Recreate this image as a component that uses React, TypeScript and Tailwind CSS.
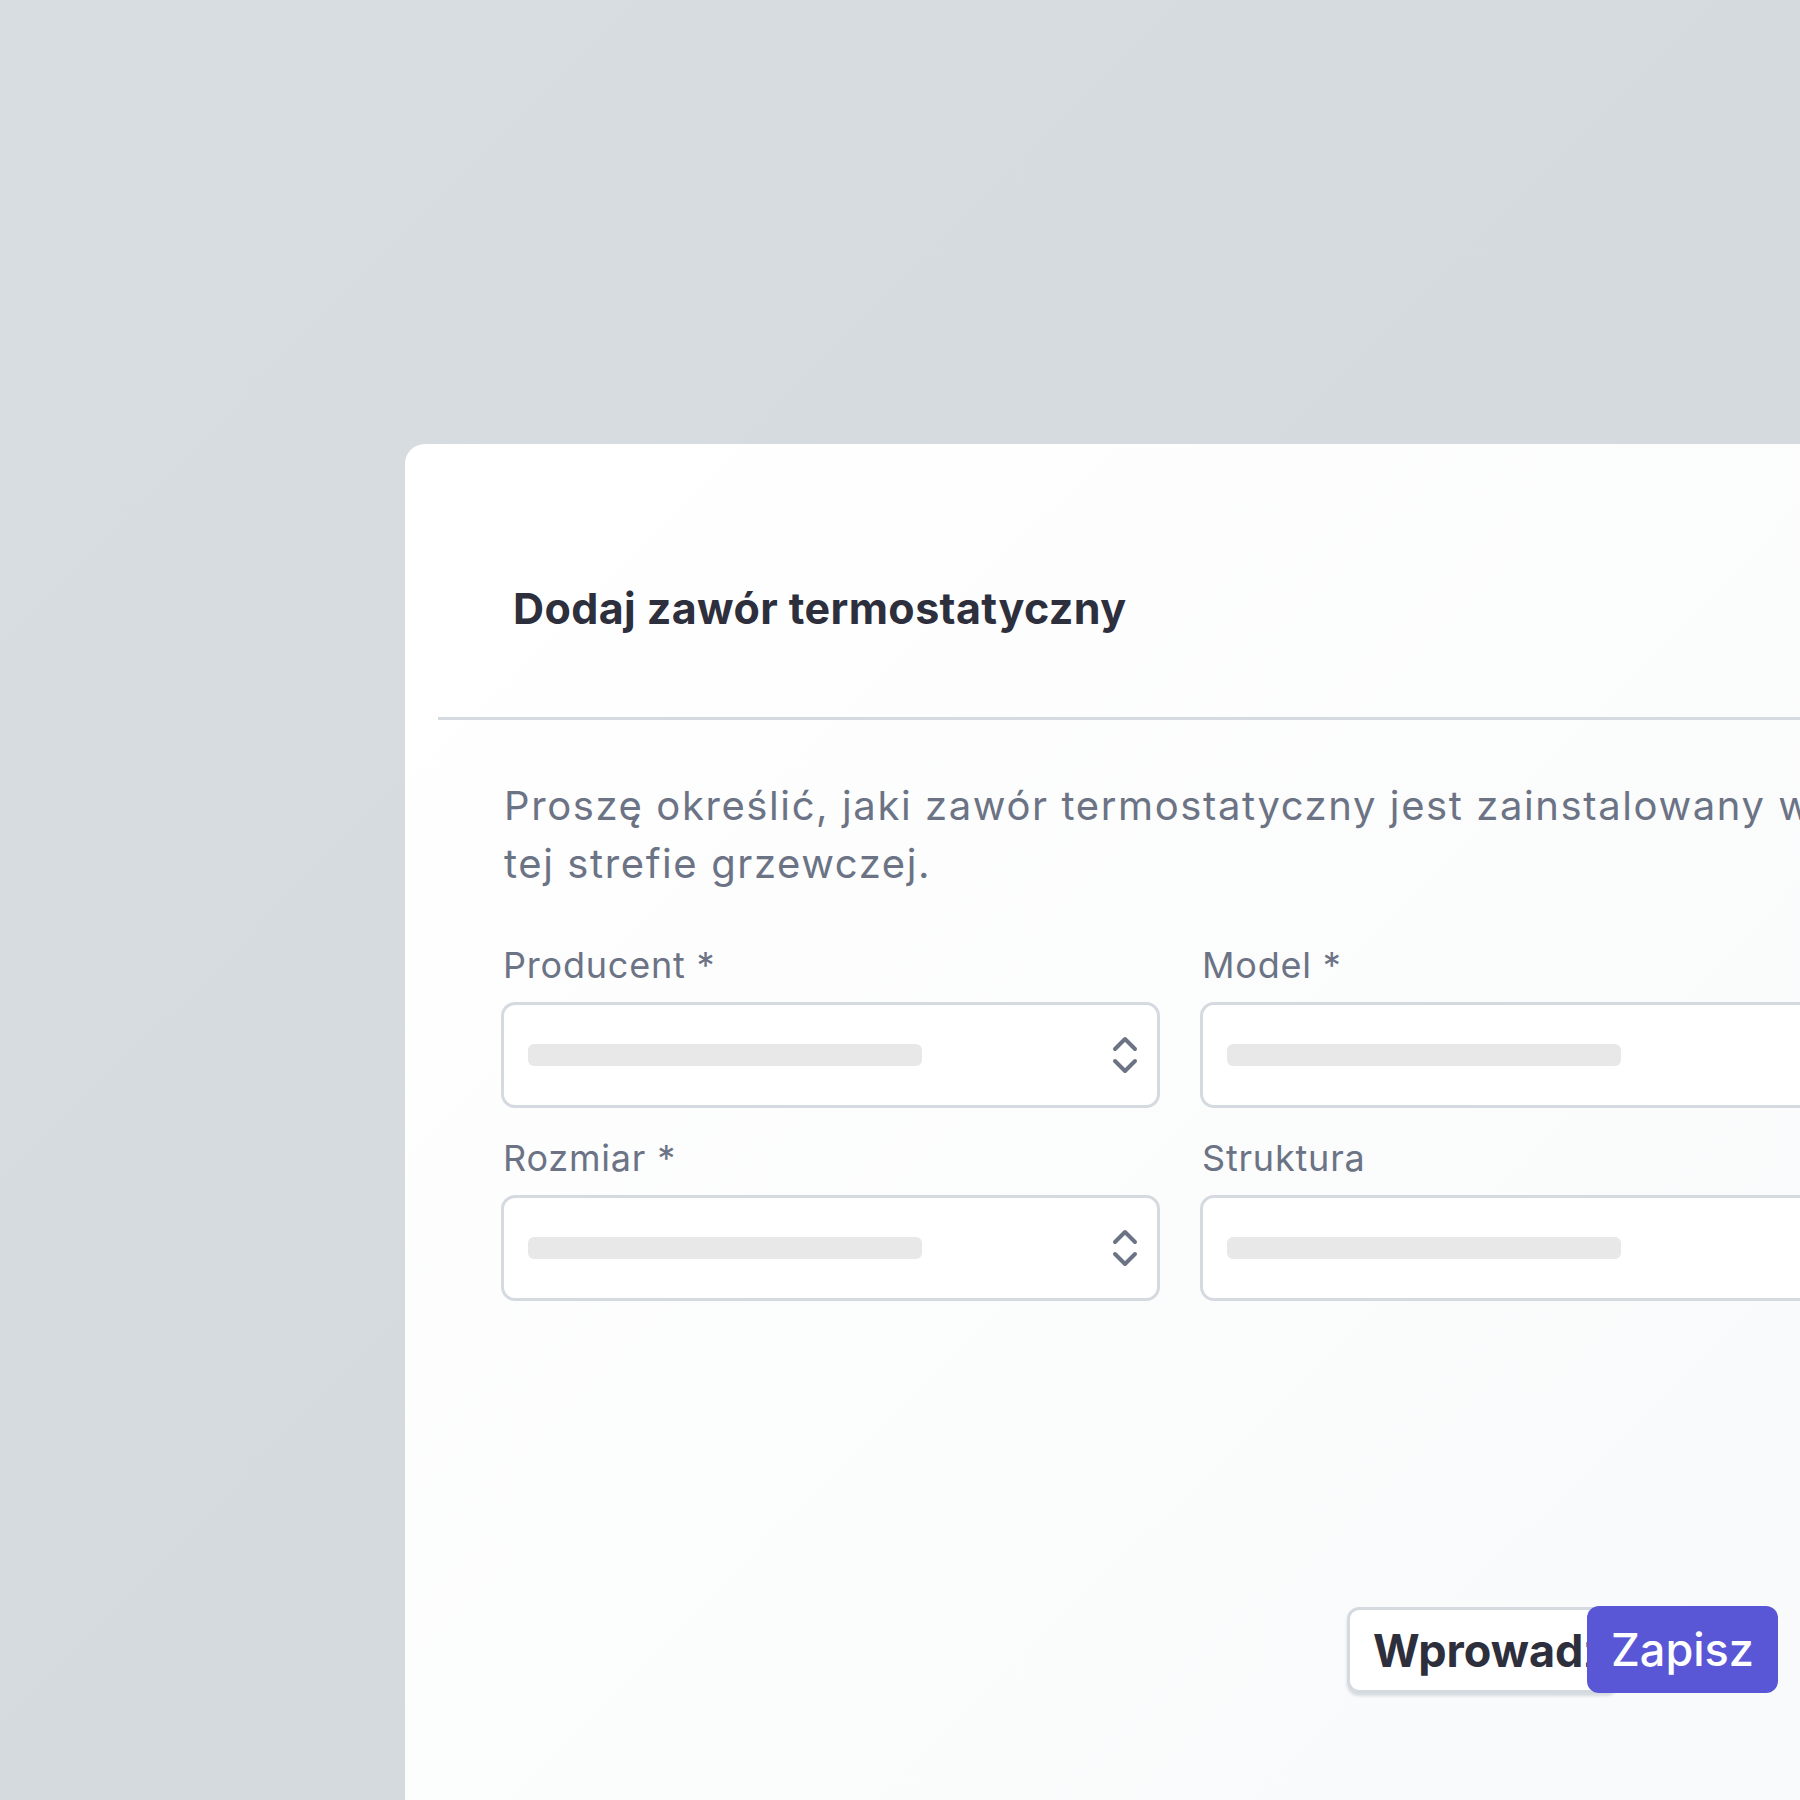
import React from "react";

const font = { fontFamily: "Inter, 'Noto Sans', sans-serif" };

function Chevrons() {
  return (
    <svg width="26" height="38" viewBox="0 0 26 38" fill="none" className="shrink-0">
      <path d="M3 13 L13 3 L23 13" stroke="#6b7385" strokeWidth="4" strokeLinecap="round" strokeLinejoin="round" />
      <path d="M3 25 L13 35 L23 25" stroke="#6b7385" strokeWidth="4" strokeLinecap="round" strokeLinejoin="round" />
    </svg>
  );
}

function Field({ label, select }: { label: string; select?: boolean }) {
  return (
    <div className="flex flex-col w-[659px] shrink-0">
      <div className="text-[36px] leading-none tracking-[0.8px] text-[#6b7385] mb-[19px] pl-[2px]">{label}</div>
      <div className="h-[106px] rounded-[14px] border-[3px] border-[#d5dae0] bg-white flex items-center pl-[24px] pr-[19px] justify-between">
        <div className="w-[394px] h-[22px] rounded-[6px] bg-[#e8e8e9]" />
        {select ? <Chevrons /> : null}
      </div>
    </div>
  );
}

export default function App() {
  return (
    <div
      className="w-[1800px] h-[1800px] overflow-hidden bg-gradient-to-br from-[#d8dde1] to-[#d3d8dc] pt-[444px] pl-[405px]"
      style={font}
    >
      <div className="w-[1500px] h-[1500px] rounded-t-[20px] bg-gradient-to-br from-white to-[#f8f9fa]">
        <div className="pt-[143px] pl-[108px]">
          <h1 className="text-[43px] leading-none font-bold text-[#2e2f3c] tracking-[0.4px]">
            Dodaj zawór termostatyczny
          </h1>
        </div>
        <div className="mt-[87px] ml-[33px] h-[3px] bg-[#d5dae0]" />
        <div className="pl-[99px]">
          <p className="mt-[57px] w-[1354px] text-[40px] leading-[58px] tracking-[1.6px] text-[#6b7385]">
            Proszę określić, jaki zawór termostatyczny jest zainstalowany w tej strefie grzewczej.
          </p>
          <div className="mt-[54px] flex gap-[40px] -ml-[3px]">
            <Field label="Producent *" select />
            <Field label="Model *" />
          </div>
          <div className="mt-[32px] flex gap-[40px] -ml-[3px]">
            <Field label="Rozmiar *" select />
            <Field label="Struktura" />
          </div>
        </div>
        <div className="mt-[306px] pl-[942px] flex items-start">
          <button className="h-[86px] w-[271px] shrink-0 rounded-[12px] border-[3px] border-[#d5dae0] bg-white shadow-[0_3px_3px_rgba(150,160,175,0.35)] pl-[23px] text-left text-[45px] font-bold text-[#2e2f3c] leading-none overflow-hidden whitespace-nowrap">
            Wprowadź
          </button>
          <button className="relative z-10 -ml-[31px] -mt-[1px] h-[87px] w-[191px] shrink-0 rounded-[12px] bg-[#5a57d7] text-[45px] font-medium text-white leading-none">
            Zapisz
          </button>
        </div>
      </div>
    </div>
  );
}
